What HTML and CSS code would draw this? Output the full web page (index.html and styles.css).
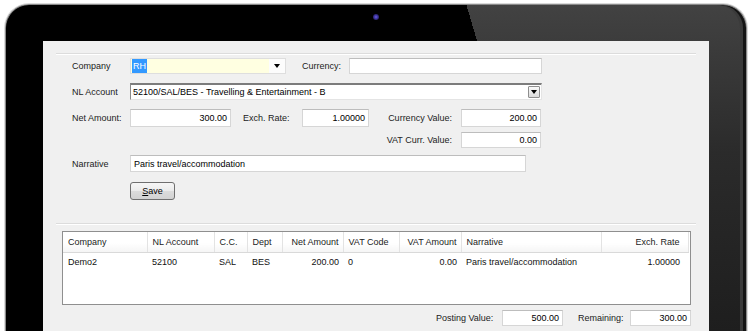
FILE: index.html
```html
<!DOCTYPE html>
<html lang="en">
<head>
    <meta charset="UTF-8">
    <meta name="viewport" content="width=device-width, initial-scale=1.0">
    <title>Journal Entry</title>
    <link rel="stylesheet" href="styles.css">
</head>
<body>
    <div class="tablet">
        <div class="camera"></div>
        <div class="screen">
            <!-- entry form -->
            <div class="group form">
                <div class="row row-1">
                    <span class="lbl">Company</span>
                    <div class="combo combo-company">
                        <span class="combo-text"><span class="sel">RH</span></span>
                        <span class="combo-drop"><span class="arrow"></span></span>
                    </div>
                    <span class="lbl lbl-currency">Currency:</span>
                    <div class="field w-currency"></div>
                </div>
                <div class="row row-2">
                    <span class="lbl">NL Account</span>
                    <div class="combo combo-account">
                        <span class="combo-text">52100/SAL/BES - Travelling &amp; Entertainment - B</span>
                        <span class="drop-btn"><span class="arrow"></span></span>
                    </div>
                </div>
                <div class="row row-3">
                    <span class="lbl">Net Amount:</span>
                    <div class="field num w-net">300.00</div>
                    <span class="lbl lbl-exch">Exch. Rate:</span>
                    <div class="field num w-exch">1.00000</div>
                    <span class="lbl lbl-right">Currency Value:</span>
                    <div class="field num w-value">200.00</div>
                </div>
                <div class="row row-4">
                    <span class="lbl lbl-right lbl-vat">VAT Curr. Value:</span>
                    <div class="field num w-value">0.00</div>
                </div>
                <div class="row row-5">
                    <span class="lbl">Narrative</span>
                    <div class="field w-narrative">Paris travel/accommodation</div>
                </div>
                <div class="row row-6">
                    <span class="lbl"></span>
                    <button class="btn"><u>S</u>ave</button>
                </div>
            </div>

            <!-- posted lines -->
            <div class="group lines">
                <div class="grid">
                    <table>
                        <thead>
                            <tr>
                                <th class="c-company">Company</th>
                                <th class="c-account">NL Account</th>
                                <th class="c-cc">C.C.</th>
                                <th class="c-dept">Dept</th>
                                <th class="c-net right">Net Amount</th>
                                <th class="c-vatcode">VAT Code</th>
                                <th class="c-vatamt right">VAT Amount</th>
                                <th class="c-narr">Narrative</th>
                                <th class="c-rate right">Exch. Rate</th>
                            </tr>
                        </thead>
                        <tbody>
                            <tr>
                                <td>Demo2</td>
                                <td>52100</td>
                                <td>SAL</td>
                                <td>BES</td>
                                <td class="right">200.00</td>
                                <td>0</td>
                                <td class="right">0.00</td>
                                <td>Paris travel/accommodation</td>
                                <td class="right c-rate">1.00000</td>
                            </tr>
                        </tbody>
                    </table>
                </div>
                <div class="totals">
                    <span class="lbl t-posting">Posting Value:</span>
                    <div class="field num w-total">500.00</div>
                    <span class="lbl t-remaining">Remaining:</span>
                    <div class="field num w-total">300.00</div>
                </div>
            </div>
        </div>
    </div>
</body>
</html>
```

FILE: styles.css
```css
/* page */
html, body {
    margin: 0;
    padding: 0;
    height: 100%;
    overflow: hidden;
    background: #fff;
}

body {
    box-sizing: border-box;
    padding: 4px 5px 0;
    font-family: "Liberation Sans", Arial, sans-serif;
    font-size: 9px;
    color: #1e1e1e;
}

/* tablet frame */
.tablet {
    box-sizing: border-box;
    height: 327px;
    padding: 0 37px;
    border: 1px solid #8a8a8a;
    border-bottom: 0;
    border-radius: 24px 24px 0 0;
    background:
        linear-gradient(73.4deg, #000 66.6%, transparent 66.6%),
        linear-gradient(to bottom, #424242 0, #2b2b2b 45%, #1e1e1e 100%);
    box-shadow: 0 0 0 1px #dadada, inset -3px 0 0 #141414, inset -6px 0 0 #3a3a3a;
}

.camera {
    width: 6px;
    height: 6px;
    margin: 9px auto 21px;
    border-radius: 50%;
    background: radial-gradient(circle, #6a5ee0 0, #3a3199 45%, #141226 100%);
}

.screen {
    box-sizing: border-box;
    height: 290px;
    padding: 13px 13px 0;
    background: #f0f0f0;
}

/* etched group line */
.group {
    border-top: 1px solid #fff;
    box-shadow: 0 -1px 0 #dcdcdc;
}

.form {
    padding: 3px 0 0 16px;
}

.row {
    display: flex;
    align-items: center;
}

.row-1 { height: 16px; margin-bottom: 9px; }
.row-2 { height: 17px; margin-bottom: 9px; }
.row-3 { height: 18px; margin-bottom: 5px; }
.row-4 { height: 16px; margin-bottom: 7px; }
.row-5 { height: 17px; margin-bottom: 10px; }
.row-6 { height: 17px; }

.lbl {
    flex: none;
    width: 58px;
    color: #222;
    white-space: nowrap;
}

.lbl-currency { width: 47px; margin-left: 16px; }
.lbl-exch { width: 59px; margin-left: 12px; }
.lbl-right {
    box-sizing: border-box;
    width: 92px;
    padding-right: 9px;
    text-align: right;
}
.lbl-vat { margin-left: 297px; }

/* inputs */
.field {
    box-sizing: border-box;
    height: 100%;
    padding: 0 3px;
    border: 1px solid #d6d6d6;
    border-top-color: #bdbdbd;
    background: #fff;
    color: #000;
    display: flex;
    align-items: center;
    white-space: nowrap;
}

.num { justify-content: flex-end; }

.w-currency { width: 193px; }
.w-net { width: 101px; }
.w-exch { width: 67px; }
.w-value { width: 80px; }
.w-narrative { width: 396px; }
.w-total { width: 61px; }

/* combo boxes */
.combo {
    box-sizing: border-box;
    height: 100%;
    display: flex;
    align-items: center;
    background: #fff;
    color: #000;
}

.combo-company {
    width: 156px;
    border: 1px solid #dedede;
}

.combo-company .combo-text {
    flex: 1;
    height: 100%;
    display: flex;
    align-items: center;
    padding-left: 1px;
    background: #ffffe1;
}

.sel {
    padding: 2px 1px;
    background: #3399ff;
    color: #fff;
}

.combo-drop {
    width: 16px;
    height: 100%;
    display: flex;
    align-items: center;
    justify-content: center;
    background: #fcfcfc;
}

.arrow {
    width: 0;
    height: 0;
    border-left: 3.5px solid transparent;
    border-right: 3.5px solid transparent;
    border-top: 4px solid #000;
}

.combo-account {
    width: 412px;
    border: 1px solid #e4e4e4;
    border-top: 2px solid #7c7c7c;
    border-left: 1px solid #8a8a8a;
    padding: 0 1px 0 2px;
}

.combo-account .combo-text { flex: 1; }

.drop-btn {
    box-sizing: border-box;
    width: 12px;
    height: 12px;
    display: flex;
    align-items: center;
    justify-content: center;
    border: 1px solid #8e8e8e;
    border-radius: 1px;
    background: linear-gradient(#fafafa, #dadada);
}

/* button */
.btn {
    box-sizing: border-box;
    width: 45px;
    height: 18px;
    padding: 0;
    border: 1px solid #6f6f6f;
    border-radius: 3px;
    background: linear-gradient(#f6f6f6 0, #ebebeb 50%, #dcdcdc 51%, #d2d2d2 100%);
    font-family: inherit;
    font-size: 9px;
    color: #000;
}

/* grid of lines */
.lines {
    margin-top: 25px;
    padding: 6px 5px 0 6px;
}

.grid {
    box-sizing: border-box;
    width: 629px;
    height: 74px;
    border: 1px solid #8f8f8f;
    background: #fff;
}

table {
    border-collapse: collapse;
    table-layout: fixed;
    width: 625px;
}

th, td {
    box-sizing: border-box;
    overflow: hidden;
}

th {
    height: 20px;
    padding: 0 5px;
    font-weight: normal;
    text-align: left;
    color: #222;
    white-space: nowrap;
    background: linear-gradient(#fff 0, #fff 55%, #f5f5f5 100%);
    border-right: 1px solid #e3e3e3;
    border-bottom: 1px solid #d9d9d9;
}

td {
    height: 20px;
    padding: 0 5px;
    color: #111;
    white-space: nowrap;
}

th.right, td.right {
    text-align: right;
    padding-right: 4px;
}

.c-company { width: 84px; }
.c-account { width: 67px; }
.c-cc { width: 33px; }
.c-dept { width: 35px; }
.c-net { width: 61px; }
.c-vatcode { width: 56px; }
.c-vatamt { width: 62px; }
.c-narr { width: 140px; }
th.c-rate, td.c-rate { width: 87px; padding-right: 8px; }

/* totals */
.totals {
    display: flex;
    justify-content: flex-end;
    align-items: center;
    height: 16px;
    margin-top: 5px;
}

.t-posting { width: 66px; }
.t-remaining { width: 52px; margin-left: 15px; }
```
